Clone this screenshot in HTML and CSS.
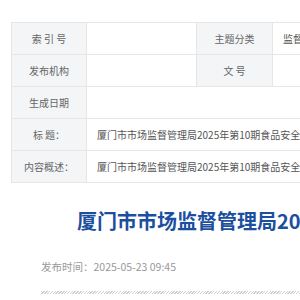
FILE: index.html
```html
<!DOCTYPE html>
<html lang="zh-CN">
<head>
<meta charset="utf-8">
<link rel="stylesheet" href="styles.css">
</head>
<body>
<div class="page">
  <table class="meta">
    <colgroup>
      <col class="c1"><col class="c2"><col class="c3"><col class="c4">
    </colgroup>
    <tr>
      <th>索 引 号</th><td></td>
      <th>主题分类</th><td>监督管理</td>
    </tr>
    <tr>
      <th>发布机构</th><td></td>
      <th>文 号</th><td></td>
    </tr>
    <tr>
      <th>生成日期</th><td colspan="3"></td>
    </tr>
    <tr>
      <th>标 题：</th>
      <td colspan="3">厦门市市场监督管理局2025年第10期食品安全监督抽检信息公告</td>
    </tr>
    <tr>
      <th>内容概述：</th>
      <td colspan="3">厦门市市场监督管理局2025年第10期食品安全监督抽检信息公告</td>
    </tr>
  </table>

  <div class="article">
    <h1 class="title">厦门市市场监督管理局2025年第10期食品安全监督抽检信息公告</h1>
    <div class="info">发布时间：2025-05-23 09:45</div>
    <div class="hatch"></div>
  </div>
</div>
</body>
</html>
```

FILE: styles.css
```css
html, body {
  margin: 0;
  padding: 0;
  overflow: hidden;
  background: #fff;
}
body {
  font-family: "Noto Sans CJK SC", "Noto Sans", sans-serif;
  width: 300px;
  height: 300px;
}
.page {
  width: 1000px;
  padding: 22px 0 0 11px;
}
.meta {
  border-collapse: collapse;
  table-layout: fixed;
  width: 900px;
  font-size: 10px;
}
.meta col.c1 { width: 75px; }
.meta col.c2 { width: 110px; }
.meta col.c3 { width: 76px; }
.meta col.c4 { width: 639px; }
.meta tr { height: 32px; }
.meta th, .meta td {
  border: 1px solid #e6e6e6;
  padding: 0 10px;
  white-space: nowrap;
  overflow: hidden;
}
.meta th {
  background: #f4f5f7;
  color: #666;
  font-weight: normal;
  text-align: center;
}
.meta td {
  color: #555;
  text-align: left;
}
.article {
  padding: 0 0 0 30px;
}
.title {
  margin: 24px 0 0 36px;
  font-size: 20px;
  line-height: 28px;
  font-weight: bold;
  color: #1d4f9f;
  white-space: nowrap;
}
.info {
  margin-top: 24px;
  font-size: 10.5px;
  line-height: 16px;
  color: #999;
}
.hatch {
  margin-top: 16px;
  height: 3px;
  width: 900px;
  background: repeating-linear-gradient(135deg, #d0d0d0 0 1px, #fff 1px 2px);
}
```
